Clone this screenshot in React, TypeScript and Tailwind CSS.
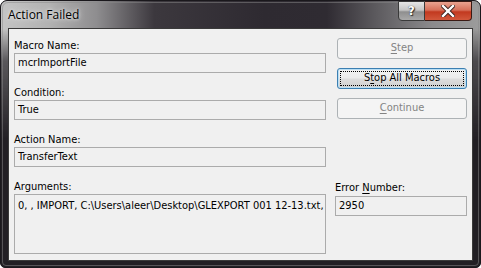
import React from "react";

const ui = { fontFamily: '"DejaVu Sans Condensed", "DejaVu Sans", sans-serif' };

function Field({ label, value, tall }: { label: React.ReactNode; value: string; tall?: boolean }) {
  return (
    <div className="flex flex-col">
      <div className="h-[14px] leading-[14px] text-[11px] text-black">{label}</div>
      <div
        className={`${tall ? "h-[60px] items-start pt-[3px]" : "h-[20px] items-center"} flex border border-[#ababab] bg-[#f0f0f0] pl-[3px] text-[11px] text-black whitespace-nowrap overflow-hidden`}
      >
        {value}
      </div>
    </div>
  );
}

function DisabledButton({ children }: { children: React.ReactNode }) {
  return (
    <div className="h-[21px] w-[130px] ml-[2px] flex items-center justify-center rounded-[3px] border border-[#adb2b5] bg-[#f4f4f4] text-[11px] text-[#838383]">
      {children}
    </div>
  );
}

export default function App() {
  return (
    <div
      className="w-[481px] h-[268px] relative rounded-t-[7px] rounded-b-[5px] border border-[#1a181c] bg-[#221f24] overflow-hidden"
      style={ui}
    >
      {/* glass tint */}
      <div className="absolute inset-0 bg-[linear-gradient(to_right,#c4c4c4_0%,#b2b2b2_10%,#8e8d8f_20%,#3c383e_32%,#2e2a31_55%,#2f2b32_68%,#5b595d_78%,#8b8a8c_90%,#9c9c9c_100%)] [mask-image:linear-gradient(to_bottom,black_0px,black_28px,rgba(0,0,0,0.35)_60px,transparent_140px)]" />
      <div className="absolute inset-[1px] rounded-t-[6px] rounded-b-[4px] border border-[#8a8a8a]/50" />

      {/* title bar */}
      <div className="relative h-[27px] flex items-center">
        <span
          className="pl-[7px] pt-[1px] text-[12px] text-black"
          style={{ fontFamily: '"Open Sans", "Noto Sans", sans-serif', textShadow: "0 0 6px #e8e8e8, 0 0 3px #e8e8e8" }}
        >
          Action Failed
        </span>
        <div className="absolute top-0 right-[8px] flex">
          <div className="w-[27px] h-[20px] rounded-bl-[4px] border border-[#3a3a3a] bg-[linear-gradient(to_bottom,#e6e6e6_0%,#c5c5c5_45%,#8f8f8f_55%,#a9a9a9_100%)] flex items-center justify-center text-[13px] font-bold text-white [text-shadow:0_0_1px_#222,1px_1px_1px_#333]">
            ?
          </div>
          <div className="w-[47px] h-[20px] rounded-br-[4px] border border-l-0 border-[#3a1a14] bg-[linear-gradient(to_bottom,#e9a390_0%,#d6705a_45%,#c2391f_55%,#d2583c_100%)] flex items-center justify-center">
            <svg width="14" height="12" viewBox="0 0 14 12">
              <path d="M2 1 L12 11 M12 1 L2 11" stroke="#3a2420" strokeWidth="4.2" strokeLinecap="square" />
              <path d="M2 1 L12 11 M12 1 L2 11" stroke="#ffffff" strokeWidth="2.4" strokeLinecap="square" />
            </svg>
          </div>
        </div>
      </div>

      {/* client area */}
      <div className="relative mx-[7px] h-[233px] border border-[#3a3a3a] bg-[#f0f0f0] flex">
        <div className="w-[317px] pl-[5px] pt-[10px] flex flex-col gap-[13px]">
          <Field label="Macro Name:" value="mcrImportFile" />
          <Field label="Condition:" value="True" />
          <Field label="Action Name:" value="TransferText" />
          <Field label="Arguments:" value="0, , IMPORT, C:\Users\aleer\Desktop\GLEXPORT 001 12-13.txt," tall />
        </div>
        <div className="pl-[9px] pt-[9px] flex flex-col">
          <div className="flex flex-col gap-[9px]">
            <DisabledButton>
              <span className="underline underline-offset-2">S</span>tep
            </DisabledButton>
            <div className="h-[21px] w-[130px] ml-[2px] rounded-[3px] border border-[#3c7fb1] bg-[linear-gradient(to_bottom,#f2f2f2_0%,#ebebeb_48%,#dddddd_52%,#cfcfcf_100%)] p-[2px] shadow-[inset_0_0_0_1px_#b9dff5]">
              <div className="h-full w-full border border-dotted border-black flex items-center justify-center text-[11px] text-black">
                S<span className="underline underline-offset-2">t</span>op All Macros
              </div>
            </div>
            <DisabledButton>
              <span className="underline underline-offset-2">C</span>ontinue
            </DisabledButton>
          </div>
          <div className="mt-[62px] h-[14px] leading-[14px] text-[11px] text-black">
            Error <span className="underline underline-offset-2">N</span>umber:
          </div>
          <div className="mt-[1px] h-[20px] w-[132px] flex items-center border border-[#ababab] bg-[#f0f0f0] pl-[3px] text-[11px] text-black">
            2950
          </div>
        </div>
      </div>
    </div>
  );
}
